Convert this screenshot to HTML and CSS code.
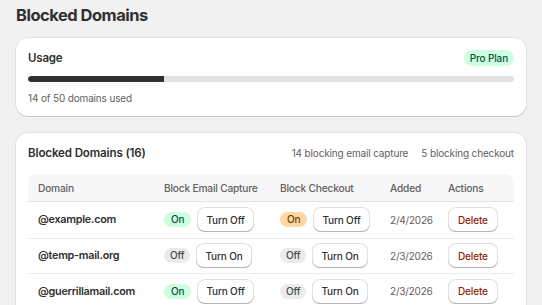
FILE: index.html
```html
<!DOCTYPE html>
<html>
<head>
<meta charset="utf-8">
<link rel="stylesheet" href="styles.css">
</head>
<body>
<div class="page">
  <h1 class="title">Blocked Domains</h1>
  <div class="card usage">
    <div class="card-head">
      <span class="card-title">Usage</span>
      <span class="badge success">Pro Plan</span>
    </div>
    <div class="bar"><div class="fill" style="width:28%"></div></div>
    <div class="muted">14 of 50 domains used</div>
  </div>
  <div class="card list">
    <div class="card-head">
      <span class="card-title">Blocked Domains (16)</span>
      <div class="stats">
        <span>14 blocking email capture</span>
        <span>5 blocking checkout</span>
      </div>
    </div>
    <div class="table">
      <div class="row head">
        <div class="cell">Domain</div>
        <div class="cell">Block Email Capture</div>
        <div class="cell">Block Checkout</div>
        <div class="cell">Added</div>
        <div class="cell">Actions</div>
      </div>
      <div class="row">
        <div class="cell domain">@example.com</div>
        <div class="cell"><span class="badge success">On</span><button class="btn">Turn Off</button></div>
        <div class="cell"><span class="badge warn">On</span><button class="btn">Turn Off</button></div>
        <div class="cell date">2/4/2026</div>
        <div class="cell"><button class="btn danger">Delete</button></div>
      </div>
      <div class="row">
        <div class="cell domain">@temp-mail.org</div>
        <div class="cell"><span class="badge off">Off</span><button class="btn">Turn On</button></div>
        <div class="cell"><span class="badge off">Off</span><button class="btn">Turn On</button></div>
        <div class="cell date">2/3/2026</div>
        <div class="cell"><button class="btn danger">Delete</button></div>
      </div>
      <div class="row">
        <div class="cell domain">@guerrillamail.com</div>
        <div class="cell"><span class="badge success">On</span><button class="btn">Turn Off</button></div>
        <div class="cell"><span class="badge off">Off</span><button class="btn">Turn On</button></div>
        <div class="cell date">2/3/2026</div>
        <div class="cell"><button class="btn danger">Delete</button></div>
      </div>
    </div>
  </div>
</div>
</body>
</html>
```
FILE: styles.css
```css
* { box-sizing: border-box; }
html, body { margin: 0; padding: 0; }
body {
  background: #f1f1f1;
  font-family: Inter, "Noto Sans", sans-serif;
  color: #303030;
  overflow: hidden;
}
.page {
  padding: 4px 16px 0;
  display: flex;
  flex-direction: column;
}
.title {
  margin: 0;
  font-size: 16.5px;
  font-weight: 700;
  line-height: 22px;
  letter-spacing: -0.5px;
  height: 34px;
}
.card {
  background: #fff;
  border-radius: 12px;
  box-shadow: 0 0 0 1px rgba(0,0,0,0.06), 0 1px 0 rgba(0,0,0,0.12);
  padding: 12px;
}
.list { margin-top: 17px; padding-top: 12px; }
.card-head {
  display: flex;
  align-items: center;
  justify-content: space-between;
  height: 16px;
}
.card-title {
  font-size: 11.5px;
  font-weight: 600;
  letter-spacing: -0.2px;
}
.list .card-title { font-size: 11.6px; letter-spacing: -0.15px; }
.badge {
  display: inline-flex;
  align-items: center;
  height: 15px;
  padding: 0 7px;
  border-radius: 8px;
  font-size: 10px;
  font-weight: 500;
  letter-spacing: -0.15px;
  line-height: 15px;
}
.badge.success { background: #cdfee1; color: #0c5132; }
.badge.warn { background: #ffd6a4; color: #5e4200; }
.badge.off { background: #ebebeb; color: #4a4a4a; padding: 0 6px; }
.usage .badge { height: 16px; padding: 0 6px; }
.bar {
  margin-top: 10px;
  height: 6px;
  border-radius: 3px;
  background: #e3e3e3;
  overflow: hidden;
}
.fill { height: 100%; background: #303030; border-radius: 3px 0 0 3px; }
.muted {
  margin-top: 10px;
  font-size: 10px;
  letter-spacing: -0.15px;
  line-height: 12px;
  color: #616161;
}
.stats {
  display: flex;
  gap: 13px;
  font-size: 10px;
  letter-spacing: -0.15px;
  color: #616161;
}
.table { margin-top: 13px; }
.row {
  display: grid;
  grid-template-columns: 126px 116px 110px 58px 1fr;
  align-items: center;
  height: 35.5px;
  border-top: 1px solid #ebebeb;
}
.row.head {
  height: 28px;
  background: #f7f7f7;
  border-top: none;
  border-bottom: 1px solid #e3e3e3;
  font-size: 10.2px;
  letter-spacing: -0.2px;
  color: #616161;
  font-weight: 500;
  border-radius: 8px 8px 0 0;
}
.row.head + .row { border-top: none; }
.cell {
  padding-left: 10px;
  display: flex;
  align-items: center;
  gap: 6px;
}
.domain { font-size: 10.8px; font-weight: 600; letter-spacing: -0.25px; }
.date { font-size: 10px; letter-spacing: -0.2px; color: #616161; }
.btn {
  font-family: inherit;
  font-size: 10px;
  font-weight: 500;
  letter-spacing: -0.15px;
  color: #303030;
  background: #fff;
  height: 25px;
  padding: 0 9px;
  border: none;
  border-radius: 8px;
  box-shadow: inset 0 -1px 0 #b5b5b5, inset 0 0 0 1px rgba(0,0,0,0.12);
}
.btn.danger { color: #8e1f0b; padding: 0 10px; }
```
